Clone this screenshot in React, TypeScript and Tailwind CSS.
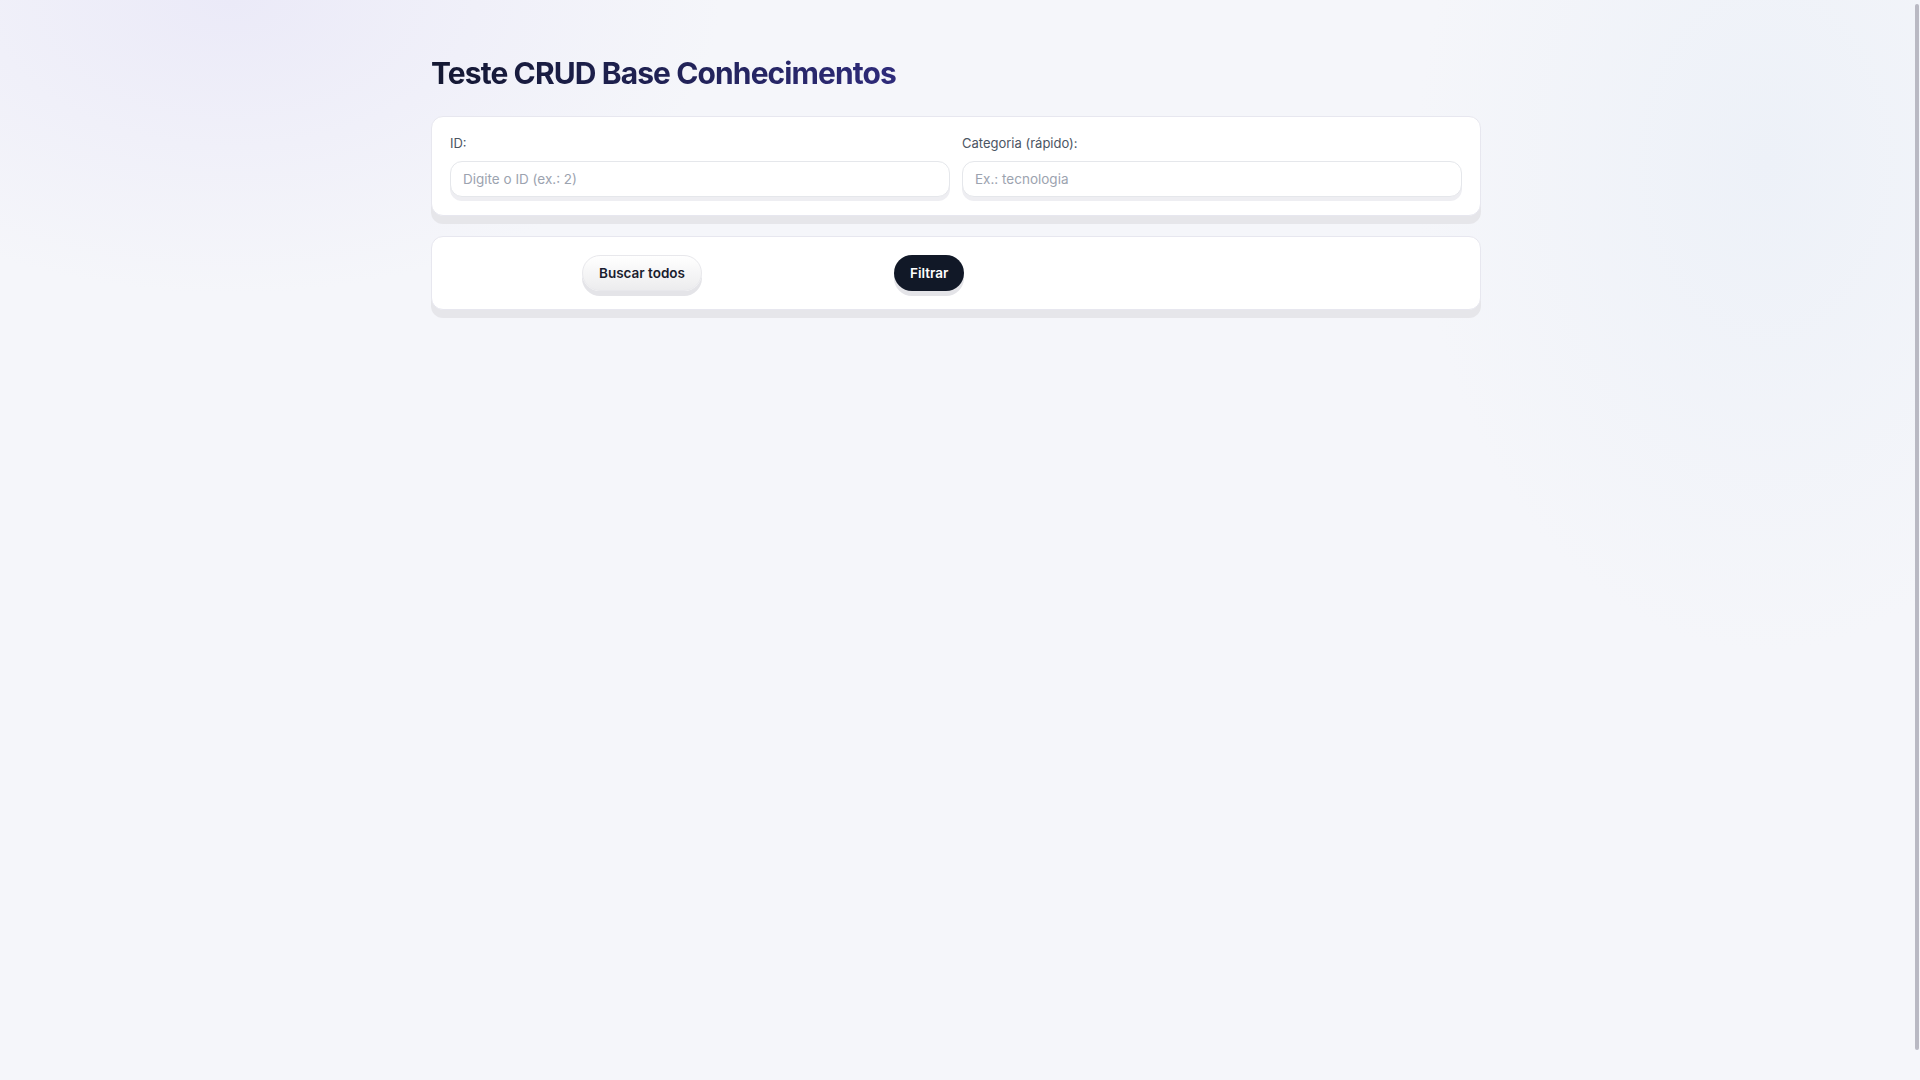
import React from "react";

export default function App() {
  return (
    <div
      className="min-h-screen w-full bg-[#f5f6fa] bg-[radial-gradient(ellipse_700px_420px_at_12%_0%,#ebeaf8_0%,rgba(245,246,250,0)_70%),radial-gradient(ellipse_500px_700px_at_92%_15%,#edf1f8_0%,rgba(245,246,250,0)_70%)] pr-[8px]"
      style={{ fontFamily: "Inter, 'Noto Sans', sans-serif" }}
    >
      <div className="mx-auto w-[1050px] pt-[55px]">
        <h1 className="text-[30px] leading-[36px] font-bold tracking-[-0.9px] bg-gradient-to-r from-[#141832] to-[#2e2b7a] bg-clip-text text-transparent w-fit">
          Teste CRUD Base Conhecimentos
        </h1>

        <div className="mt-[25px] rounded-[12px] border border-[#e7e7ef] bg-white p-[18px] shadow-[0_8px_0_#e6e6ea]">
          <div className="grid grid-cols-2 gap-3">
            <div className="flex flex-col">
              <label className="text-[13px] leading-[16px] text-[#4b5563]">ID:</label>
              <input
                className="mt-[10px] h-9 rounded-[12px] border border-[#e5e7eb] bg-white px-3 text-[13.5px] text-[#111827] placeholder:text-[#9ca3af] shadow-[0_4px_0_#eeeef2] outline-none"
                placeholder="Digite o ID (ex.: 2)"
              />
            </div>
            <div className="flex flex-col">
              <label className="text-[13px] leading-[16px] text-[#4b5563]">Categoria (rápido):</label>
              <input
                className="mt-[10px] h-9 rounded-[12px] border border-[#e5e7eb] bg-white px-3 text-[13.5px] text-[#111827] placeholder:text-[#9ca3af] shadow-[0_4px_0_#eeeef2] outline-none"
                placeholder="Ex.: tecnologia"
              />
            </div>
          </div>
        </div>

        <div className="mt-[20px] rounded-[12px] border border-[#e7e7ef] bg-white p-[18px] shadow-[0_8px_0_#e6e6ea]">
          <div className="flex items-center pl-[132px] gap-[192px]">
            <button className="h-9 rounded-full border border-[#e8e8ec] bg-gradient-to-b from-white to-[#ececee] px-4 text-[13.5px] font-semibold text-[#1a1d2e] shadow-[0_5px_0_#e4e4e8]">
              Buscar todos
            </button>
            <button className="h-9 rounded-full bg-[#111827] px-4 text-[13.5px] font-semibold text-white shadow-[0_5px_0_#e4e4e8]">
              Filtrar
            </button>
          </div>
        </div>
      </div>
      <div className="fixed right-[1px] top-[4px] h-[1046px] w-[4px] rounded-full bg-[#b9b9c3]" />
    </div>
  );
}
